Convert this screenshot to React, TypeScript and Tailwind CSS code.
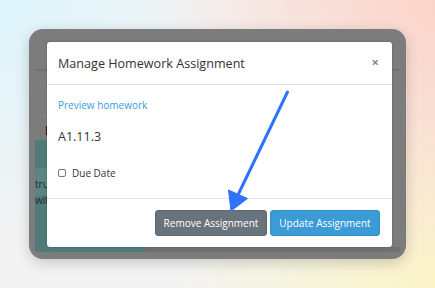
export default function App() {
  return (
    <div className="w-[435px] h-[288px] overflow-hidden bg-[radial-gradient(circle_at_0%_0%,#dcf4fb_0%,transparent_45%),radial-gradient(circle_at_100%_0%,#fcd3c8_0%,transparent_55%),radial-gradient(circle_at_100%_100%,#fbf5c6_0%,transparent_50%),linear-gradient(#f3f3f3,#f3f3f3)] pt-[29px] pl-[29px] relative font-['Open_Sans',sans-serif]">
      {/* Screenshot frame */}
      <div className="relative w-[377px] h-[230px] rounded-[14px] bg-[#7c7c7c] shadow-[0_4px_14px_rgba(0,0,0,0.18)] overflow-hidden pt-[13px] pl-[18px]">
        {/* page behind the backdrop */}
        <div className="absolute left-[6px] right-[6px] top-[40px] h-[2px] bg-[#707070]" />
        <div className="absolute left-[6px] w-[12px] top-[86px] h-px bg-[#858585]" />
        <div className="absolute left-[16px] top-[96px] text-[12px] font-bold text-[#111] leading-none">I</div>
        <div className="absolute left-[6px] w-[110px] top-[111px] h-[112px] bg-[#4f7b78]" />
        <div className="absolute left-[6px] w-[12px] top-[139px] h-[28px] bg-[#5b8582]" />
        <div className="absolute left-[6px] top-[150px] text-[10px] text-[#1c2b2a] leading-none">tru</div>
        <div className="absolute left-[6px] top-[166px] text-[10px] text-[#1c2b2a] leading-none">wit</div>
        <div className="absolute left-[116px] right-[6px] top-[218px] h-[5px] bg-[#6f6f6f]" />

        {/* Modal */}
        <div className="relative w-[345px] h-[205px] bg-white rounded-[3px] flex flex-col shadow-[0_0_2px_rgba(0,0,0,0.3)]">
          <div className="h-[43px] border-b border-[#e3e3e3] flex items-center justify-between pl-[11px] pr-[13px]">
            <span className="text-[12.6px] text-[#333] mt-[2px]">Manage Homework Assignment</span>
            <span className="text-[13px] font-bold text-[#888] leading-none -mt-[2px]">×</span>
          </div>
          <div className="flex-1 px-[11px] flex flex-col">
            <span className="mt-[13px] text-[10px] text-[#3a9ed9] leading-[14px]">Preview homework</span>
            <span className="mt-[16px] text-[12.5px] text-[#333] leading-[18px]">A1.11.3</span>
            <label className="mt-[20px] flex items-center gap-[6px] text-[10px] text-[#333] leading-[14px]">
              <span className="w-[8px] h-[8px] border border-[#777] rounded-[2px] bg-white" />
              Due Date
            </label>
          </div>
          <div className="h-[49px] border-t border-[#e8e8e8] flex items-center justify-end gap-[3px] pr-[12px]">
            <button className="h-[26px] w-[112px] rounded-[3px] bg-[#69737c] text-white text-[10px] border border-[#5e676f]">
              Remove Assignment
            </button>
            <button className="h-[26px] w-[110px] rounded-[3px] bg-[#3a9bd6] text-white text-[10px] border border-[#3690c8]">
              Update Assignment
            </button>
          </div>
        </div>
      </div>

      {/* annotation arrow */}
      <svg className="absolute left-0 top-0" width="435" height="288" viewBox="0 0 435 288">
        <line x1="287.5" y1="92" x2="237" y2="197" stroke="#2f72fb" strokeWidth="3" strokeLinecap="round" />
        <polygon points="228.5,190 247.5,198.5 231,211" fill="#2f72fb" stroke="#2f72fb" strokeWidth="1" strokeLinejoin="round" />
      </svg>
    </div>
  );
}
